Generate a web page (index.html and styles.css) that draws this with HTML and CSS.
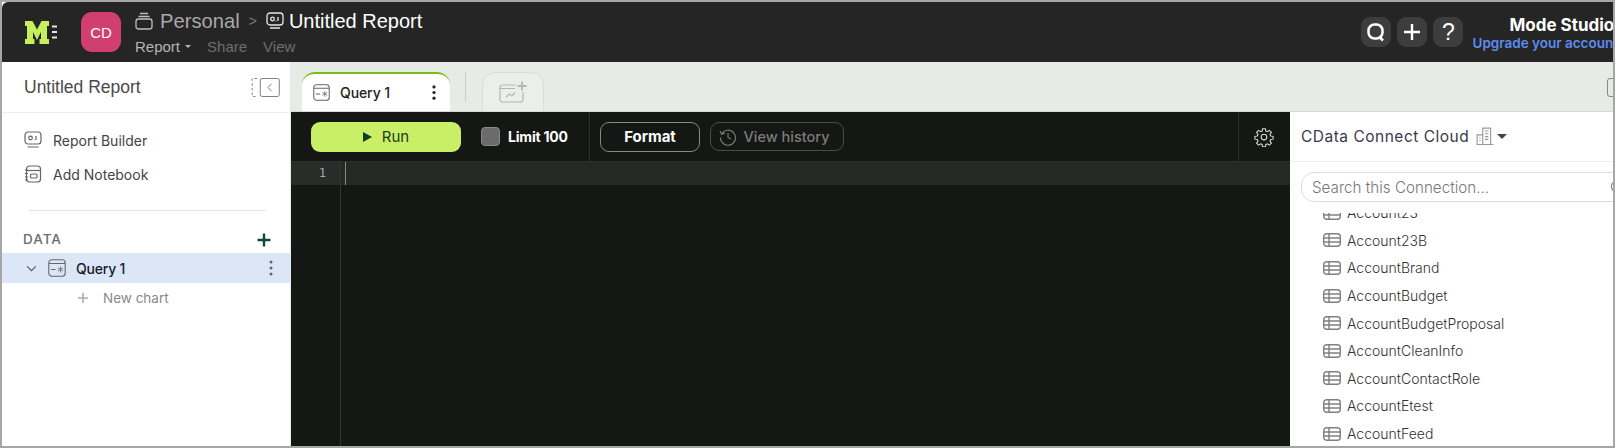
FILE: index.html
```html
<!DOCTYPE html>
<html lang="en">
<head>
<meta charset="utf-8">
<title>Untitled Report</title>
<link rel="stylesheet" href="styles.css">
</head>
<body>
<div class="frame">
  <header class="topbar">
    <div class="logo">
      <svg class="logo-m" viewBox="0 0 24 23" fill="#c6ef5d"><path d="M0 0h7.500L12 8.500 16.500 0H24v5h-2v13h2v5H14.500v-5h1.500V11l-4 8-4-8v7h1.500v5H0v-5h2V5H0z"/></svg>
      <svg class="logo-dots" viewBox="0 0 5 14"><path d="M0 1.500h5M0 7h5M0 12.500h5" stroke="#e8e8e8" stroke-width="2"/></svg>
    </div>
    <div class="avatar">CD</div>
    <div class="crumbs">
      <div class="crumb-line">
        <svg class="crumb-folder" viewBox="0 0 18 18" fill="none" stroke="#bdbdbd" stroke-width="1.300"><path d="M5 1.500h8M3.500 4.500h11"/><rect x="1" y="7" width="16" height="10" rx="2.500"/></svg>
        <span class="crumb-personal">Personal</span>
        <span class="crumb-sep">&gt;</span>
        <svg class="crumb-report" viewBox="0 0 18 18" fill="none" stroke="#e8e8e8" stroke-width="1.300"><rect x="1" y="1" width="16" height="12" rx="3"/><circle cx="6.500" cy="7" r="1.800"/><path d="M12 5v4M9.700 9h.6M4 16h10"/></svg>
        <span class="crumb-title">Untitled Report</span>
      </div>
      <div class="crumb-menu">
        <span class="menu-report">Report<i class="menu-caret"></i></span>
        <span class="menu-dim">Share</span>
        <span class="menu-dim">View</span>
      </div>
    </div>
    <div class="top-right">
      <button class="round-btn"><svg viewBox="0 0 20 20" fill="none" stroke="#fff" stroke-width="2.500"><rect x="2.500" y="2.500" width="14" height="14" rx="6"/><path d="M13 14.500l4 4"/></svg></button>
      <button class="round-btn"><svg viewBox="0 0 20 20" fill="none" stroke="#fff" stroke-width="2.400"><path d="M10 2v16M2 10h16"/></svg></button>
      <button class="round-btn help">?</button>
      <div class="account">
        <div class="account-name">Mode Studio</div>
        <div class="account-link">Upgrade your account</div>
      </div>
    </div>
  </header>
  <div class="body">
    <aside class="sidebar">
      <div class="side-head">
        <span>Untitled Report</span>
        <svg class="collapse" viewBox="0 0 30 20" fill="none" stroke="#777" stroke-width="1"><path d="M6 .5H1v19h5" stroke-dasharray="2.500 2.500"/><rect x="9.500" y=".5" width="20" height="19" rx="2"/><path d="M21.500 6l-4 4 4 4"/></svg>
      </div>
      <nav class="side-nav">
        <div class="side-link">
          <svg class="side-icon" viewBox="0 0 18 18" fill="none" stroke="#666" stroke-width="1.200"><rect x="1" y="1" width="16" height="12" rx="3"/><circle cx="6.500" cy="7" r="1.800"/><path d="M12 5v4M9.700 9h.6M3.500 16h11"/></svg>
          <span>Report Builder</span>
        </div>
        <div class="side-link">
          <svg class="side-icon" viewBox="0 0 18 18" fill="none" stroke="#666" stroke-width="1.200"><rect x="2.500" y="1" width="14" height="16" rx="3"/><path d="M2.500 5.500h14"/><rect x="6.500" y="9" width="6.500" height="4" rx="1"/><path d="M1 5h3M1 8.500h3M1 12h3M1 15h3"/></svg>
          <span>Add Notebook</span>
        </div>
      </nav>
      <div class="side-rule"></div>
      <div class="data-head">
        <span>DATA</span>
        <svg class="data-plus" viewBox="0 0 14 14" fill="none" stroke="#0d4a36" stroke-width="2.400"><path d="M7 .5v13M.5 7h13"/></svg>
      </div>
      <div class="query-row">
        <svg class="query-chev" viewBox="0 0 12 8" fill="none" stroke="#555" stroke-width="1.200"><path d="M1 1.500l5 5 5-5"/></svg>
        <svg class="query-icon" viewBox="0 0 18 18" fill="none" stroke="#666" stroke-width="1.100"><rect x=".8" y=".8" width="16.400" height="16.400" rx="3"/><path d="M1 4.500h16M3 10.500h4.500"/><path d="M12.500 7.500v6M9.900 9l5.200 3M15.100 9l-5.200 3" stroke-width=".8"/></svg>
        <span class="query-name">Query 1</span>
        <svg class="kebab" viewBox="0 0 4 16" fill="#666"><circle cx="2" cy="2" r="1.500"/><circle cx="2" cy="8" r="1.500"/><circle cx="2" cy="14" r="1.500"/></svg>
      </div>
      <div class="new-chart">
        <svg class="new-plus" viewBox="0 0 10 10" fill="none" stroke="#aaa" stroke-width="1.600"><path d="M5 0v10M0 5h10"/></svg>
        <span>New chart</span>
      </div>
    </aside>
    <main class="content">
      <div class="tabs">
        <div class="tab">
          <svg class="tab-icon" viewBox="0 0 18 18" fill="none" stroke="#666" stroke-width="1.100"><rect x=".8" y=".8" width="16.400" height="16.400" rx="3"/><path d="M1 4.500h16M3 10.500h4.500"/><path d="M12.500 7.500v6M9.900 9l5.200 3M15.100 9l-5.200 3" stroke-width=".8"/></svg>
          <span class="tab-name">Query 1</span>
          <svg class="tab-kebab" viewBox="0 0 4 16" fill="#222"><circle cx="2" cy="2" r="1.700"/><circle cx="2" cy="8" r="1.700"/><circle cx="2" cy="14" r="1.700"/></svg>
        </div>
        <div class="tab-rule"></div>
        <div class="tab-add">
          <svg viewBox="0 0 28 22" fill="none" stroke="#b4b6b2" stroke-width="1.200"><path d="M17 4H3.500A2.500 2.500 0 0 0 1 6.500v12A2.500 2.500 0 0 0 3.500 21h18a2.500 2.500 0 0 0 2.500-2.500V11M1 7.500h15M7 16l3.500-3 2.500 2 3-3.500"/><path d="M23 .5v9M18.500 5h9" stroke-width="1.800"/></svg>
        </div>
        <div class="tab-far"></div>
      </div>
      <div class="work">
        <section class="editor">
          <div class="toolbar">
            <div class="tool-left">
              <button class="run"><i class="run-tri"></i>Run</button>
              <span class="check"></span>
              <span class="limit">Limit 100</span>
            </div>
            <div class="tool-mid">
              <button class="format">Format</button>
              <button class="history">
                <svg viewBox="0 0 18 18" fill="none" stroke="#777" stroke-width="1.200"><path d="M2.800 5.500A7.500 7.500 0 1 1 1.500 9.500M1 3l1.600 3.200L6 5M9 5v4.500l3 1.500"/></svg>
                View history
              </button>
            </div>
            <div class="tool-gear">
              <svg viewBox="0 0 24 24" fill="none" stroke="#d8d8d8" stroke-width="1.300"><circle cx="12" cy="12" r="3.400"/><path d="M10.300 2h3.400l.5 2.900 1.800.8 2.500-1.700 2.400 2.400-1.700 2.500.8 1.800 2.900.5v3.400l-2.900.5-.8 1.800 1.700 2.500-2.400 2.400-2.500-1.700-1.800.8-.5 2.900h-3.400l-.5-2.900-1.800-.8-2.500 1.700-2.400-2.400 1.700-2.500-.8-1.800-2.900-.5v-3.400l2.900-.5.8-1.800-1.700-2.500 2.400-2.400 2.500 1.700 1.800-.8z"/></svg>
            </div>
          </div>
          <div class="code">
            <div class="gutter"><div class="gutter-num">1</div></div>
            <div class="lines"><div class="line-active"><i class="cursor"></i></div></div>
          </div>
        </section>
        <section class="panel">
          <div class="panel-head">
            <span>CData Connect Cloud</span>
            <svg class="building" viewBox="0 0 16 16" fill="none" stroke="#999" stroke-width="1"><path d="M6 15.500V1h7v14.500M1 15.500V7h5M.5 15.500h15M8 3.500h3M8 6h3M8 8.500h3M8 11h3M3 9.500h1M3 12h1"/></svg>
            <i class="panel-caret"></i>
          </div>
          <div class="search">
            <div class="search-box">
              <span>Search this Connection...</span>
              <svg viewBox="0 0 16 16" fill="none" stroke="#888" stroke-width="1.300"><circle cx="7" cy="7" r="5.500"/><path d="M11 11l4 4"/></svg>
            </div>
          </div>
          <div class="tables">
            <ul class="table-list">
              <li><svg viewBox="0 0 18 14" fill="none" stroke="#808080" stroke-width="1.400"><rect x=".7" y=".7" width="16.600" height="12.600" rx="3"/><path d="M.7 5h16.600M.7 9h16.600M6 .7v12.600"/></svg>Account23</li>
              <li><svg viewBox="0 0 18 14" fill="none" stroke="#808080" stroke-width="1.400"><rect x=".7" y=".7" width="16.600" height="12.600" rx="3"/><path d="M.7 5h16.600M.7 9h16.600M6 .7v12.600"/></svg>Account23B</li>
              <li><svg viewBox="0 0 18 14" fill="none" stroke="#808080" stroke-width="1.400"><rect x=".7" y=".7" width="16.600" height="12.600" rx="3"/><path d="M.7 5h16.600M.7 9h16.600M6 .7v12.600"/></svg>AccountBrand</li>
              <li><svg viewBox="0 0 18 14" fill="none" stroke="#808080" stroke-width="1.400"><rect x=".7" y=".7" width="16.600" height="12.600" rx="3"/><path d="M.7 5h16.600M.7 9h16.600M6 .7v12.600"/></svg>AccountBudget</li>
              <li><svg viewBox="0 0 18 14" fill="none" stroke="#808080" stroke-width="1.400"><rect x=".7" y=".7" width="16.600" height="12.600" rx="3"/><path d="M.7 5h16.600M.7 9h16.600M6 .7v12.600"/></svg>AccountBudgetProposal</li>
              <li><svg viewBox="0 0 18 14" fill="none" stroke="#808080" stroke-width="1.400"><rect x=".7" y=".7" width="16.600" height="12.600" rx="3"/><path d="M.7 5h16.600M.7 9h16.600M6 .7v12.600"/></svg>AccountCleanInfo</li>
              <li><svg viewBox="0 0 18 14" fill="none" stroke="#808080" stroke-width="1.400"><rect x=".7" y=".7" width="16.600" height="12.600" rx="3"/><path d="M.7 5h16.600M.7 9h16.600M6 .7v12.600"/></svg>AccountContactRole</li>
              <li><svg viewBox="0 0 18 14" fill="none" stroke="#808080" stroke-width="1.400"><rect x=".7" y=".7" width="16.600" height="12.600" rx="3"/><path d="M.7 5h16.600M.7 9h16.600M6 .7v12.600"/></svg>AccountEtest</li>
              <li><svg viewBox="0 0 18 14" fill="none" stroke="#808080" stroke-width="1.400"><rect x=".7" y=".7" width="16.600" height="12.600" rx="3"/><path d="M.7 5h16.600M.7 9h16.600M6 .7v12.600"/></svg>AccountFeed</li>
            </ul>
          </div>
        </section>
      </div>
    </main>
  </div>
</div>
</body>
</html>
```
FILE: styles.css
```css
* { box-sizing: border-box; }
html, body { margin: 0; height: 100%; background: #a6a6a6; }
body { font-family: "Inter", "Liberation Sans", sans-serif; overflow: hidden; }
button { font-family: inherit; padding: 0; cursor: pointer; }
svg { display: block; flex: none; }

.frame {
  width: 1615px; height: 448px;
  border: 2px solid #a6a6a6;
  overflow: hidden;
  display: flex; flex-direction: column;
  background: #fff;
}

/* top bar */
.topbar {
  height: 60px; flex: none;
  background: #252525;
  display: flex; align-items: center;
  border-radius: 6px 0 0 0;
  padding-left: 23px;
  font-family: "Liberation Sans", sans-serif;
}
.logo { display: flex; align-items: center; gap: 3px; width: 56px; }
.logo-m { width: 24px; height: 23px; }
.logo-dots { width: 5px; height: 14px; }
.avatar {
  width: 40px; height: 40px; border-radius: 11px;
  background: #d03f6f; color: #fff;
  display: flex; align-items: center; justify-content: center;
  font-size: 15px;
}
.crumbs { margin-left: 14px; margin-top: 1px; }
.crumb-line { display: flex; align-items: center; height: 26px; }
.crumb-folder { width: 18px; height: 18px; margin-right: 7px; }
.crumb-personal { color: #a9a9a9; font-size: 20.200px; }
.crumb-sep { color: #777; font-size: 14px; margin: 0 9px 0 9px; }
.crumb-report { width: 18px; height: 18px; margin-right: 5px; }
.crumb-title { color: #fff; font-size: 20px; }
.crumb-menu { display: flex; align-items: center; height: 22px; font-size: 15px; gap: 16px; margin-top: 1px; }
.menu-report { color: #b5b5b5; display: flex; align-items: center; }
.menu-caret { width: 0; height: 0; border: 3px solid transparent; border-top-color: #b5b5b5; border-bottom: 0; margin-left: 5px; }
.menu-dim { color: #6d6f6b; }
.top-right { margin-left: auto; margin-right: -5px; display: flex; align-items: center; gap: 6px; flex: none; }
.round-btn {
  width: 30px; height: 30px; border: 0; border-radius: 9px;
  background: #3d3d3d; color: #fff;
  display: flex; align-items: center; justify-content: center;
}
.round-btn svg { width: 20px; height: 20px; }
.help { font-size: 23px; font-family: "Liberation Sans", sans-serif; }
.account { margin-left: 3px; margin-top: 3px; }
.account-name { color: #fff; font-size: 17px; line-height: 19px; font-family: "Inter", sans-serif; font-weight: 700; padding-left: 37px; white-space: nowrap; }
.account-link { color: #5b8def; font-size: 13.500px; line-height: 16px; white-space: nowrap; font-family: "Inter", sans-serif; font-weight: 600; }

/* layout */
.body { flex: 1; display: flex; min-height: 0; }
.sidebar { width: 289px; flex: none; background: #fff; color: #3a3a3a; border-right: 1px solid #e8e8e8; }
.content { flex: 1; min-width: 0; display: flex; flex-direction: column; }

/* sidebar */
.side-head {
  height: 51px; border-bottom: 1px solid #eee;
  padding: 0 9px 0 22px;
  display: flex; align-items: center; justify-content: space-between;
  font-family: "Liberation Sans", sans-serif; font-size: 17.500px; color: #4a4a4a;
}
.collapse { width: 29px; height: 19px; margin-right: 1px; }
.side-nav { padding-top: 10px; }
.side-link { height: 34px; display: flex; align-items: center; padding-left: 22px; font-size: 14px; color: #444; }
.side-icon { width: 18px; height: 18px; margin-right: 11px; }
.side-rule { height: 1px; background: #e6e6e6; margin: 19px 24px 0 27px; }
.data-head {
  display: flex; align-items: center; justify-content: space-between;
  padding: 0 19px 0 21px; height: 20px; margin-top: 18px;
  font-size: 13.500px; font-weight: 500; letter-spacing: 1px; color: #6b6b6b;
}
.data-plus { width: 14px; height: 14px; margin-top: 2px; }
.query-row {
  height: 30px; margin-top: 4px; background: #dbe6f7;
  display: flex; align-items: center; padding-left: 24px;
  color: #1a1a2a; font-size: 14px; font-weight: 500; letter-spacing: -.2px;
}
.query-chev { width: 11px; height: 7px; margin-right: 11px; }
.query-icon { width: 18px; height: 18px; margin-right: 10px; }
.query-name { flex: 1; }
.kebab { width: 4px; height: 16px; margin-right: 17px; }
.new-chart { height: 30px; display: flex; align-items: center; padding-left: 76px; color: #8a8a8a; font-size: 13.500px; }
.new-plus { width: 10px; height: 10px; margin-right: 15px; }

/* tabs */
.tabs {
  height: 50px; flex: none; background: #e8eae6;
  display: flex; align-items: flex-end; padding-left: 11px;
  border-bottom: 1px solid #d8d8d8;
}
.tab {
  width: 148px; height: 39px; background: #fff;
  border-top: 2px solid #74bf1a; border-radius: 13px 13px 0 0;
  display: flex; align-items: center; padding: 0 14px 0 11px;
  font-size: 14px; font-weight: 500; color: #222; letter-spacing: -.1px;
}
.tab-icon { width: 17px; height: 17px; margin-right: 10px; }
.tab-name { flex: 1; }
.tab-kebab { width: 4px; height: 15px; }
.tab-rule { width: 1px; height: 29px; background: #c9cbc7; margin: 0 16px 10px 15px; }
.tab-add {
  width: 62px; height: 39px; background: #eceeea;
  border: 1px solid #dcdeda; border-bottom: 0; border-radius: 13px 13px 0 0;
  display: flex; align-items: center; justify-content: center;
}
.tab-add svg { width: 28px; height: 22px; }
.tab-far { width: 14px; height: 19px; border: 1px solid #888; border-radius: 3px; margin: 0 0 14px auto; position: relative; left: 8px; }

/* editor */
.work { flex: 1; display: flex; min-height: 0; }
.editor { flex: 1; min-width: 0; background: #151715; display: flex; flex-direction: column; }
.toolbar { height: 50px; flex: none; display: flex; border-bottom: 1px solid #2e2f2e; }
.tool-left { width: 299px; display: flex; align-items: center; padding-left: 20px; border-right: 1px solid #2e2f2e; }
.run {
  width: 150px; height: 30px; border: 0; border-radius: 9px;
  background: #c8ef66; color: #1d3b22; font-size: 15px;
  display: flex; align-items: center; justify-content: center;
}
.run-tri { width: 0; height: 0; border-left: 9px solid #123d28; border-top: 5.500px solid transparent; border-bottom: 5.500px solid transparent; margin-right: 10px; }
.check { width: 19px; height: 19px; border-radius: 4px; background: #6b6b6b; border: 1px solid #888; margin-left: 20px; }
.limit { color: #fff; font-size: 14px; font-weight: 700; margin-left: 8px; letter-spacing: -.2px; }
.tool-mid { flex: 1; display: flex; align-items: center; padding-left: 10px; gap: 10px; }
.format { width: 100px; height: 30px; border: 1px solid #888; border-radius: 9px; background: transparent; color: #fff; font-size: 15px; font-weight: 700; }
.history {
  width: 134px; height: 29px; border: 1px solid #4a4b4a; border-radius: 9px; background: transparent;
  color: #7c7c7c; font-size: 14.500px; font-weight: 500;
  display: flex; align-items: center; justify-content: center; gap: 6px; padding-right: 5px;
}
.history svg { width: 18px; height: 18px; }
.tool-gear { width: 52px; border-left: 1px solid #2e2f2e; display: flex; align-items: center; justify-content: center; padding-right: 2px; }
.tool-gear svg { width: 20px; height: 20px; }
.code { flex: 1; display: flex; min-height: 0; }
.gutter { width: 50px; flex: none; border-right: 1px solid #333; }
.gutter-num { height: 23px; background: #2a2c2a; color: #aaa; font-family: "DejaVu Sans Mono", monospace; font-size: 11.500px; line-height: 23px; padding-right: 14px; text-align: right; }
.lines { flex: 1; }
.line-active { height: 23px; background: #262826; padding-left: 4px; }
.cursor { display: block; width: 1px; height: 23px; background: #888; }

/* right panel */
.panel { width: 323px; flex: none; background: #fff; display: flex; flex-direction: column; overflow: hidden; }
.panel-head {
  height: 50px; flex: none; border-bottom: 1px solid #eee;
  display: flex; align-items: center; padding-left: 11px;
  font-size: 15.500px; color: #3a3a4a; font-weight: 400; letter-spacing: .5px;
}
.building { width: 18px; height: 18px; margin-left: 7px; margin-top: -2px; }
.panel-caret { width: 0; height: 0; border: 5px solid transparent; border-top-color: #444; border-bottom: 0; margin-left: 3px; }
.search { height: 51px; flex: none; padding: 10px 0 0 11px; }
.search-box {
  width: 325px; height: 30px; border: 1px solid #ddd; border-radius: 13px;
  display: flex; align-items: center; justify-content: space-between;
  padding: 0 0 0 10px; color: #777; font-size: 15.200px; font-weight: 300;
}
.search-box svg { width: 15px; height: 15px; }
.tables { flex: 1; overflow: hidden; min-height: 0; }
.table-list { list-style: none; margin: -14px 0 0; padding: 0 0 0 33px; }
.table-list li { height: 27.600px; display: flex; align-items: center; font-size: 14px; font-weight: 300; color: #333; }
.table-list svg { width: 18px; height: 14px; margin-right: 6px; }
```
